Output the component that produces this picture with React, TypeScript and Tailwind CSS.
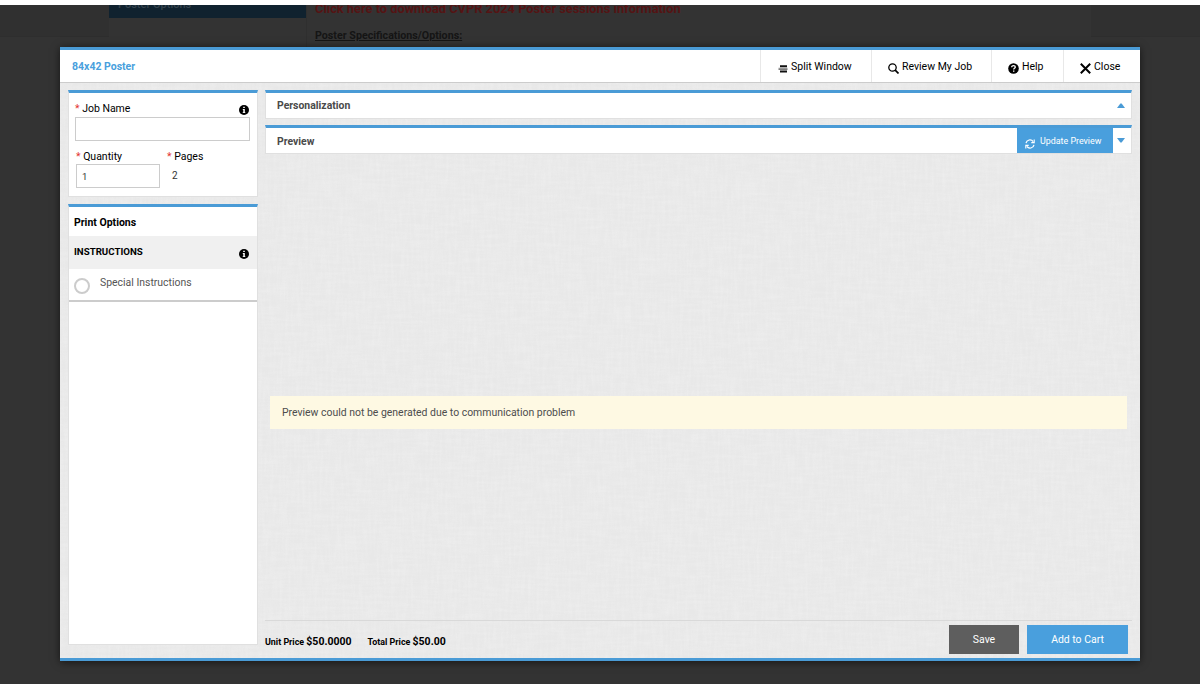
import { ReactNode, useState } from "react";
import clsx from "clsx";

function InfoIcon() {
  return (
    <svg viewBox="0 0 10 10" className="size-[10px] block">
      <circle cx="5" cy="5" r="5" fill="#000" />
      <path d="M4.2 1.7h1.6v1.3H4.2zM3.8 4h2v3.3h.5v.8H3.7v-.8h.6V4.9h-.5z" fill="#fff" />
    </svg>
  );
}

function SplitIcon() {
  return (
    <svg viewBox="0 0 10 8" className="w-[10px] h-2 block">
      <path d="M2 .2h7v2H2zM2 5.6h7v2H2z" fill="#111" />
      <path d="M.5 3.3h9M.5 4.5h9" stroke="#444" strokeWidth=".7" />
    </svg>
  );
}

function SearchIcon() {
  return (
    <svg viewBox="0 0 11 11" className="size-[11px] block" fill="none" stroke="#000">
      <circle cx="4.5" cy="4.5" r="3.7" strokeWidth="1.3" />
      <path d="M7.2 7.2l3.3 3.3" strokeWidth="1.7" />
    </svg>
  );
}

function HelpIcon() {
  return (
    <svg viewBox="0 0 11 11" className="size-[11px] block">
      <circle cx="5.5" cy="5.5" r="5.3" fill="#000" />
      <path
        d="M3.7 4.2c0-2.3 3.6-2.1 3.6-.1 0 1.2-1.6 1.2-1.6 2.4"
        fill="none"
        stroke="#fff"
        strokeWidth="1.3"
      />
      <path d="M5 7.4h1.4v1.4H5z" fill="#fff" />
    </svg>
  );
}

function CloseIcon() {
  return (
    <svg viewBox="0 0 11 11" className="size-[11px] block">
      <path d="M.8.8l9.4 9.4M10.2.8L.8 10.2" stroke="#000" strokeWidth="2" />
    </svg>
  );
}

function RefreshIcon() {
  return (
    <svg viewBox="0 0 10 10" className="size-[10px] block" fill="none" stroke="#fff">
      <path d="M1 4.2A4 4 0 0 1 8.2 2.6M9 5.8A4 4 0 0 1 1.8 7.4" strokeWidth="1.2" />
      <path d="M9.2.6v3H6.3M.8 9.4v-3h2.9" strokeWidth="1.1" />
    </svg>
  );
}

function Arrow({ up = false }: { up?: boolean }) {
  return (
    <svg viewBox="0 0 8 5" className={clsx("w-2 h-[5px] block", up && "rotate-180")}>
      <path d="M0 0h8L4.6 4.5H3.4z" fill="#4a9bd6" />
    </svg>
  );
}

// woven linen texture behind the window body
function Linen() {
  return (
    <svg className="absolute inset-0 size-full" aria-hidden="true">
      <filter id="weft" x="0" y="0" width="100%" height="100%">
        <feTurbulence type="fractalNoise" baseFrequency="0.04 0.35" numOctaves={2} seed={3} />
        <feColorMatrix values="0 0 0 0 1  0 0 0 0 1  0 0 0 0 1  1.2 0 0 0 -.42" />
      </filter>
      <filter id="warp" x="0" y="0" width="100%" height="100%">
        <feTurbulence type="fractalNoise" baseFrequency="0.35 0.04" numOctaves={2} seed={8} />
        <feColorMatrix values="0 0 0 0 1  0 0 0 0 1  0 0 0 0 1  1.2 0 0 0 -.42" />
      </filter>
      <rect width="100%" height="100%" filter="url(#weft)" opacity=".22" />
      <rect width="100%" height="100%" filter="url(#warp)" opacity=".22" />
    </svg>
  );
}

function MenuItem({
  icon,
  label,
  className,
}: {
  icon: ReactNode;
  label: string;
  className: string;
}) {
  return (
    <button
      type="button"
      className={clsx(
        "flex items-center border-l border-[#e8e8e8] text-[10.5px] text-black whitespace-nowrap",
        className
      )}
    >
      <span className="mt-[5px]">{icon}</span>
      <span className="mt-px">{label}</span>
    </button>
  );
}

function Label({ children }: { children: ReactNode }) {
  return (
    <span className="text-[10.5px] leading-[14px] text-black">
      <span className="text-[#e3342f]">*</span> {children}
    </span>
  );
}

function PageBehind() {
  return (
    <div className="h-[684px] bg-[#333] border-t-[5px] border-white flex overflow-hidden">
      <div className="w-[109px] h-8 bg-[#303030] border-b border-[#2e2e2e]" />
      <div className="w-[198px] h-[42px] border-r border-[#2f2f2f]">
        <div className="flow-root h-[13px] bg-[#10222f] text-[#34434d] text-[11px] font-medium leading-3 px-[9px]">
          <div className="-mt-[6px]">Poster Options</div>
        </div>
      </div>
      <div className="w-[784px] pl-2">
        <div className="text-[12.82px] leading-[14px] font-bold text-[#551414] -mt-[3px]">
          Click here to download CVPR 2024 Poster sessions information
        </div>
        <div className="text-[10.7px] leading-[14px] font-bold underline text-[#151515] mt-[13px]">
          Poster Specifications/Options:
        </div>
      </div>
      <div className="flex-1 h-8 bg-[#303030] border-b border-[#2e2e2e]" />
    </div>
  );
}

function Sidebar() {
  const [jobName, setJobName] = useState("");
  const [quantity, setQuantity] = useState("1");

  return (
    <aside className="w-[190px] flex flex-col">
      <section className="h-[107px] bg-white border border-[#e0e0e0] border-t-[3px] border-t-[#4a9bd6] pl-[6px] pr-[7px]">
        <div className="flex justify-between items-start pt-[9px]">
          <Label>Job Name</Label>
          <div className="mt-[3px] mr-px">
            <InfoIcon />
          </div>
        </div>
        <input
          value={jobName}
          onChange={(e) => setJobName(e.target.value)}
          className="block w-full h-6 border border-[#ccc] px-1.5 mt-px text-[9.5px]"
        />
        <div className="flex mt-[9px]">
          <div className="w-[92px] flex flex-col pl-px">
            <Label>Quantity</Label>
            <input
              value={quantity}
              onChange={(e) => setQuantity(e.target.value)}
              className="w-[84px] h-6 border border-[#ccc] px-[5px] text-[9.5px] text-[#333]"
            />
          </div>
          <div className="flex flex-col">
            <Label>Pages</Label>
            <span className="text-[10px] text-[#333] mt-[5px] ml-[5px] leading-[14px]">2</span>
          </div>
        </div>
      </section>

      <section className="mt-[7px] flex-1 bg-white border border-[#e0e0e0] border-t-[3px] border-t-[#4a9bd6]">
        <h2 className="h-[29px] flex items-center pl-[5px] pt-[2px] text-[10.5px] font-bold text-black">
          Print Options
        </h2>
        <div className="h-[33px] bg-[#f0f0f0] flex items-center justify-between pl-[5px] pr-2">
          <h3 className="text-[9.7px] font-bold text-black">INSTRUCTIONS</h3>
          <div className="mt-[3px]">
            <InfoIcon />
          </div>
        </div>
        <label className="h-[33px] border-b-2 border-[#ccc] flex items-start pl-[5px]">
          <span className="size-4 rounded-full border-2 border-[#ccc] mt-[9px]" />
          <span className="text-[10.45px] text-[#555] ml-[10px] mt-[7px] leading-[14px]">
            Special Instructions
          </span>
        </label>
      </section>
    </aside>
  );
}

function PreviewPane() {
  return (
    <main className="flex-1 flex flex-col ml-[7px]">
      <section className="h-[29px] bg-white border border-[#e0e0e0] border-t-[3px] border-t-[#4a9bd6] flex items-center justify-between pl-[11px] pr-[6px]">
        <h2 className="text-[10.45px] font-bold text-[#4a4a4a]">Personalization</h2>
        <Arrow up />
      </section>
      <section className="mt-[6px] h-[29px] bg-white border border-[#e0e0e0] border-t-[3px] border-t-[#4a9bd6] flex items-center pl-[11px] pr-[6px]">
        <h2 className="flex-1 text-[10.45px] font-bold text-[#4a4a4a] pt-[2px]">Preview</h2>
        <button
          type="button"
          className="w-24 h-full bg-[#499fdd] text-white text-[8.9px] flex items-center pl-2 gap-[5px] mr-1"
        >
          <span className="mt-[6px]">
            <RefreshIcon />
          </span>
          <span className="mt-[3px]">Update Preview</span>
        </button>
        <Arrow />
      </section>

      <div className="flex-1 pt-[242px] px-[5px]">
        <div className="h-[33px] bg-[#fef9e3] text-[#4d4d4d] text-[10.45px] flex items-center pl-3 pt-px">
          Preview could not be generated due to communication problem
        </div>
      </div>

      <footer className="h-[38px] border-t border-[#d9d9d9] flex items-center pr-1">
        <div className="flex-1 flex gap-4 text-[8.9px] font-bold text-black items-baseline pt-[5px]">
          <span>
            Unit Price <span className="text-[10.5px]">$50.0000</span>
          </span>
          <span>
            Total Price <span className="text-[10.5px]">$50.00</span>
          </span>
        </div>
        <button
          type="button"
          className="w-[70px] h-[29px] pt-px bg-[#5e5e5e] text-white text-[10.45px]"
        >
          Save
        </button>
        <button
          type="button"
          className="w-[101px] h-[29px] pt-px ml-2 bg-[#499fdd] text-white text-[10.45px]"
        >
          Add to Cart
        </button>
      </footer>
    </main>
  );
}

export default function App() {
  return (
    <div className="relative w-[1200px] h-[684px] overflow-hidden font-[Roboto,sans-serif]">
      <PageBehind />
      <div className="absolute left-[60px] top-[47px] w-[1080px] h-[614px] bg-[#e8e8e8] border-y-[3px] border-[#4a9bd6] shadow-[0_1px_8px_rgba(0,0,0,0.6)] flex flex-col">
        <Linen />
        <header className="relative h-[33px] bg-white border-b border-[#ccc] flex">
          <h1 className="flex-1 self-center pl-3 pt-px text-[10.5px] font-bold text-[#499fdd]">
            84x42 Poster
          </h1>
          <MenuItem icon={<SplitIcon />} label="Split Window" className="w-[111px] pl-[17px] gap-[3px]" />
          <MenuItem icon={<SearchIcon />} label="Review My Job" className="w-[120px] pl-4 gap-[3px]" />
          <MenuItem icon={<HelpIcon />} label="Help" className="w-[72px] pl-4 gap-[3px]" />
          <MenuItem icon={<CloseIcon />} label="Close" className="w-[77px] pl-4 gap-[3px]" />
        </header>
        <div className="relative flex-1 flex pt-[7px] pl-2 pr-2">
          <div className="flex pb-[13px]">
            <Sidebar />
          </div>
          <PreviewPane />
        </div>
      </div>
    </div>
  );
}
